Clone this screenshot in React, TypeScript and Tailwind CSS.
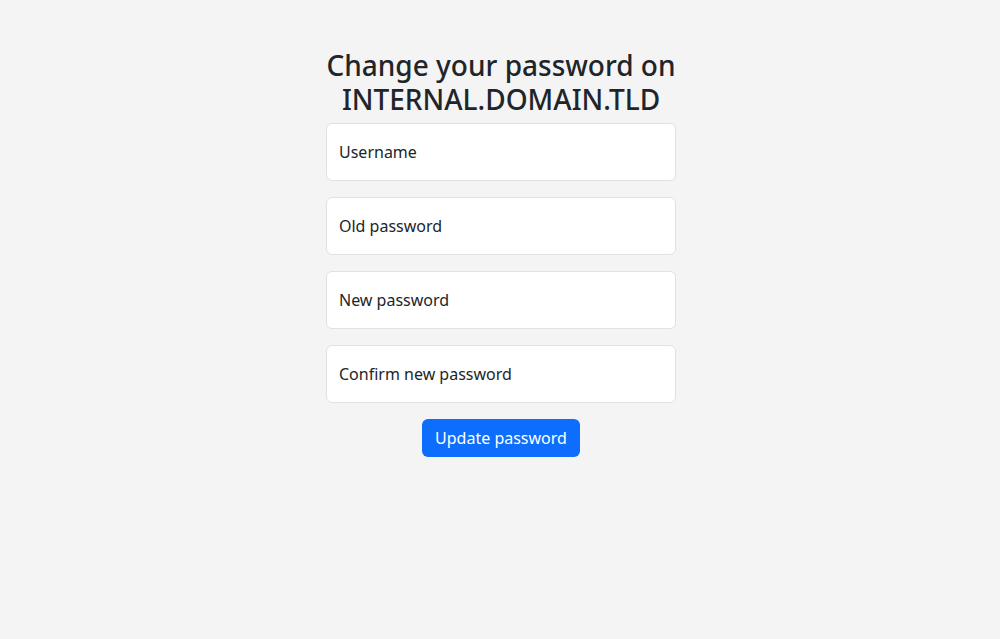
import React from "react"

const fields = [
  { id: "username", label: "Username", type: "text" },
  { id: "old", label: "Old password", type: "password" },
  { id: "new", label: "New password", type: "password" },
  { id: "confirm", label: "Confirm new password", type: "password" },
]

function FloatingInput({ id, label, type }: { id: string; label: string; type: string }) {
  return (
    <div className="relative">
      <input
        id={id}
        type={type}
        className="block h-[58px] w-full rounded-[6px] border border-[#dee2e6] bg-white px-3 text-base text-[#212529] outline-none"
      />
      <label
        htmlFor={id}
        className="pointer-events-none absolute inset-0 flex items-center px-[13px] text-base leading-6 text-[#212529]"
      >
        {label}
      </label>
    </div>
  )
}

export default function App() {
  return (
    <div
      className="min-h-screen bg-[#f4f4f4] pl-[2px] text-[#212529]"
      style={{ fontFamily: '"Noto Sans", "Liberation Sans", sans-serif' }}
    >
      <main className="mx-auto flex w-[350px] flex-col pt-[49px]">
        <h3 className="mb-[7px] text-center text-[28px] font-medium leading-[1.2]">
          Change your password on
          <br />
          INTERNAL.DOMAIN.TLD
        </h3>
        <form className="flex flex-col gap-4" onSubmit={(e) => e.preventDefault()}>
          {fields.map((f) => (
            <FloatingInput key={f.id} {...f} />
          ))}
          <div className="flex justify-center">
            <button
              type="submit"
              className="h-[38px] rounded-[6px] bg-[#0d6efd] px-[13px] text-base text-white"
            >
              Update password
            </button>
          </div>
        </form>
      </main>
    </div>
  )
}
